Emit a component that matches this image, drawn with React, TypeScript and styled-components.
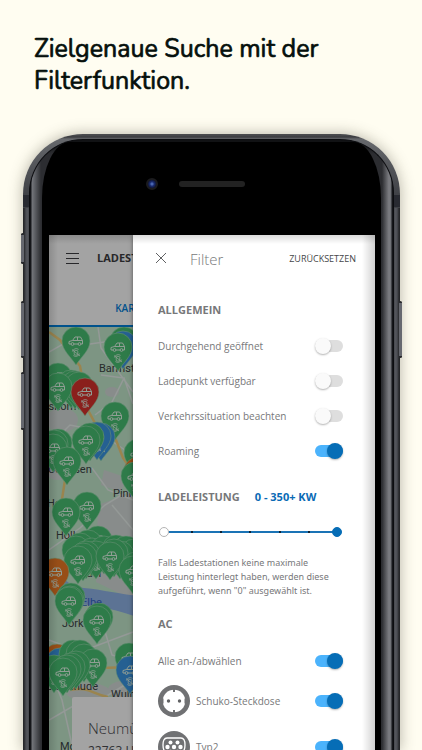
import React, { useState } from "react";
import styled, { createGlobalStyle } from "styled-components";

const GlobalStyle = createGlobalStyle`
  *, *::before, *::after { box-sizing: border-box; }
  body {
    margin: 0;
    background: #fffdf1;
    font-family: "Open Sans", "Noto Sans", sans-serif;
  }
  button { font: inherit; border: 0; padding: 0; background: none; cursor: pointer; }
`;

const Page = styled.main`
  height: 100vh;
  display: flex;
  flex-direction: column;
  overflow: hidden;
`;

const Headline = styled.h1`
  margin: 0;
  padding: 33px 34px 37px;
  max-width: 384px;
  color: #06100c;
  font: 400 25px/32px "Nunito", "Lato", sans-serif;
  -webkit-text-stroke: 0.7px #06100c;
`;

const Phone = styled.section`
  position: relative;
  flex: 1;
  min-height: 0;
  margin: 0 22px 0 23px;
  padding: 5px 6px 0;
  display: flex;
  border-radius: 60px 60px 0 0;
  background:
    linear-gradient(90deg, #27282b 0 1px, #4c4e54 3px, #55575d 5px, transparent 6px calc(100% - 6px), #55575d calc(100% - 5px), #4c4e54 calc(100% - 3px), #27282b calc(100% - 1px)) 0 74px no-repeat,
    linear-gradient(#4a4b4e 0 1px, #3b3c40 3px, #66686c 5px, #404247 60px);
  box-shadow: 0 0 14px 1px rgba(70, 66, 50, 0.35);
`;

const SideKey = styled.span<{ $side: "left" | "right"; $top: number; $size: number }>`
  position: absolute;
  ${(p) => p.$side}: -2px;
  top: ${(p) => p.$top}px;
  width: 3px;
  height: ${(p) => p.$size}px;
  border-radius: 2px;
  border: solid #26272a;
  border-width: 2px 0;
  background: #66686f;
`;

const Antenna = styled.span<{ $side: "left" | "right" }>`
  position: absolute;
  ${(p) => p.$side}: 0;
  top: 61px;
  width: 6px;
  height: 12px;
  background: #282a31;
`;

const Rim = styled.div`
  flex: 1;
  min-width: 0;
  display: flex;
  padding: 2px 12px 0;
  border-radius: 54px 54px 0 0;
  border: 1px solid #0c0d10;
  border-bottom: 0;
  background:
    linear-gradient(#111214 0 3px, transparent 14px),
    linear-gradient(90deg, #15161a 0 1px, #74767b 2px, #5c5e63 5px, #2c2d31 11px, #2c2d31 calc(100% - 11px), #7d7e83 calc(100% - 4px), #6c6e73 calc(100% - 2px), #15161a calc(100% - 1px));
`;

const Glass = styled.div`
  flex: 1;
  min-width: 0;
  display: flex;
  flex-direction: column;
  padding: 0 6px 0 7px;
  border-radius: 28px 28px 0 0 / 56px 56px 0 0;
  background: #000;
`;

const Sensors = styled.div`
  flex: none;
  height: 93px;
  display: grid;
  grid-template-columns: 1fr 66px 1fr;
  align-items: center;
  column-gap: 21px;
  padding-bottom: 10px;
`;

const Camera = styled.span`
  justify-self: end;
  width: 12px;
  height: 12px;
  border-radius: 50%;
  border: 2px solid #1b1b1e;
  background: radial-gradient(circle, #4a66b0 0 1px, #1c2f78 2px, #10173a 4px);
`;

const Speaker = styled.span`
  height: 6px;
  border-radius: 3px;
  background: #222;
`;

const Screen = styled.div`
  position: relative;
  flex: 1;
  min-height: 0;
  overflow: hidden;
  display: flex;
  flex-direction: column;
  background: #fff;
`;

const AppBar = styled.header`
  flex: none;
  height: 45px;
  padding: 0 17px;
  display: flex;
  align-items: center;
  gap: 18px;
  color: #3e3e42;
`;

const AppTitle = styled.h2`
  margin: 0;
  font-size: 11px;
  font-weight: 700;
`;

const IconButton = styled.button`
  display: flex;
  color: inherit;
`;

const Tabs = styled.nav`
  flex: none;
  height: 47px;
  display: grid;
  grid-template-columns: 1fr 1fr;
`;

const Tab = styled.button<{ $active?: boolean }>`
  padding-top: 10px;
  border-bottom: 2px solid ${(p) => (p.$active ? "#0080dc" : "transparent")};
  color: ${(p) => (p.$active ? "#0080dc" : "#8a8a8a")};
  font-size: 10px;
  font-weight: 600;
`;

const MapArea = styled.div`
  position: relative;
  flex: 1;
  min-height: 0;
  overflow: hidden;
  background: #c6e8cf;
`;

const MapDrawing = styled.svg`
  display: block;
  width: 326px;
  height: 423px;
`;

const PlaceCard = styled.article`
  position: absolute;
  top: 370px;
  left: 23px;
  right: 23px;
  height: 150px;
  padding: 18px 16px;
  border-radius: 2px;
  background: #fff;
  color: #4c4c50;
  font-size: 12px;
  line-height: 18px;
  white-space: nowrap;
`;

const PlaceName = styled.h3`
  margin: 0 0 1px;
  font-size: 15px;
  line-height: 26px;
  font-weight: 300;
`;

const Scrim = styled.div`
  position: absolute;
  inset: 0;
  background: rgba(0, 0, 0, 0.36);
`;

const Drawer = styled.aside`
  position: absolute;
  inset: 0 0 auto 84px;
  padding: 0 32px 0 25px;
  background: #fff;
  color: #77787a;
  box-shadow: 0 0 4px rgba(0, 0, 0, 0.5);
`;

const ScreenShade = styled.div`
  position: absolute;
  inset: 0;
  pointer-events: none;
  background:
    linear-gradient(rgba(0, 0, 0, 0.14), transparent 9px),
    linear-gradient(90deg, rgba(0, 0, 0, 0.14), transparent 9px),
    linear-gradient(270deg, rgba(0, 0, 0, 0.18), transparent 13px);
`;

const DrawerBar = styled.header`
  height: 46px;
  margin: 0 -13px 0 -3px;
  display: flex;
  align-items: center;
`;

const DrawerTitle = styled.h2`
  flex: 1;
  margin: 0 0 0 23px;
  padding-top: 2px;
  font-size: 15px;
  font-weight: 300;
`;

const ResetButton = styled.button`
  color: #454648;
  font-size: 9px;
`;

const GroupTitle = styled.h3<{ $gap: number }>`
  margin: ${(p) => p.$gap}px 0 0;
  display: flex;
  gap: 15px;
  font-size: 11px;
  line-height: 16px;
  font-weight: 700;
`;

const Range = styled.output`
  color: #0a6ab5;
`;

const Row = styled.label<{ $height: number }>`
  height: ${(p) => p.$height}px;
  display: flex;
  align-items: center;
  gap: 6px;
  font-size: 10px;
  cursor: pointer;
`;

const RowText = styled.span`
  flex: 1;
`;

const Rows = styled.div<{ $gap: number }>`
  padding-top: ${(p) => p.$gap}px;
`;

const Switch = styled.input.attrs({ type: "checkbox", role: "switch" })`
  appearance: none;
  flex: none;
  width: 28px;
  height: 12px;
  margin: 0;
  display: flex;
  align-items: center;
  border-radius: 6px;
  background: #dedede;
  cursor: pointer;

  &::before {
    content: "";
    width: 16px;
    height: 16px;
    border-radius: 50%;
    background: #fafafa;
    box-shadow: 0 1px 2px rgba(0, 0, 0, 0.3);
  }

  &:checked {
    justify-content: flex-end;
    background: #4bb3fc;
  }

  &:checked::before {
    background: #066db6;
  }
`;

const Slider = styled.div`
  position: relative;
  height: 20px;
  margin: 17px 1px 0;
  display: flex;
  align-items: center;
`;

const SliderTrack = styled.div`
  flex: 1;
  height: 2px;
  margin: 0 5px;
  display: flex;
  justify-content: space-evenly;
  background: #1a73b5;
`;

const Tick = styled.span`
  width: 2px;
  height: 2px;
  background: #0d2233;
`;

const Handle = styled.input.attrs({ type: "range", min: 0, max: 6, step: 1 })<{ $filled?: boolean }>`
  position: absolute;
  inset: 0;
  width: 100%;
  margin: 0;
  appearance: none;
  background: none;
  pointer-events: none;

  &::-webkit-slider-thumb {
    appearance: none;
    width: 10px;
    height: 10px;
    border-radius: 50%;
    border: 1px solid ${(p) => (p.$filled ? "#066db6" : "#b4b4b4")};
    background: ${(p) => (p.$filled ? "#066db6" : "#fff")};
    pointer-events: auto;
  }
`;

const Note = styled.p`
  margin: 14px 0 0;
  font-family: "Noto Sans", sans-serif;
  font-size: 9px;
  line-height: 14px;
`;

type PinData = [number, number, string?];

const GREEN = "#48c072";
const RED = "#d8332c";
const BLUE = "#3b96e4";
const ORANGE = "#ee7a24";

const pins: PinData[] = [
  [124, 365], [123, 369, BLUE], [76, 365], [118, 371],
  [58, 401], [71, 408], [75, 409], [79, 410], [58, 411], [85, 416, RED],
  [115, 440],
  [101, 461, BLUE], [97, 460, BLUE], [90, 461], [86, 464],
  [58, 467], [54, 468], [53, 472], [67, 485],
  [138, 477], [138, 495, ORANGE], [135, 500],
  [87, 530], [66, 536],
  [98, 564], [88, 568], [80, 571], [76, 574], [92, 576], [104, 574], [116, 573], [126, 574], [134, 577],
  [96, 579], [86, 579], [83, 581], [78, 584], [120, 579], [114, 577], [110, 580], [136, 590], [133, 594], [147, 594, BLUE],
  [55, 596, ORANGE], [71, 621], [70, 624], [69, 625],
  [99, 641], [97, 644],
  [57, 682, ORANGE], [60, 686, BLUE], [73, 678], [80, 678], [84, 682], [93, 687],
  [76, 689], [71, 691], [54, 693], [67, 693], [63, 696],
  [129, 681], [130, 694, BLUE],
];

const Pin = ({ x, y, color = GREEN }: { x: number; y: number; color?: string }) => (
  <g transform={`translate(${x} ${y})`}>
    <path
      d="M0 0C-5-8-14-15-14-24A14 14 0 0 1 14-24C14-15 5-8 0 0Z"
      fill={color}
      stroke="#a0e0b4"
      strokeWidth="0.6"
    />
    <g fill="none" stroke="#e2f7e8" strokeWidth="1" strokeLinejoin="round">
      <path d="M-5-21H-7V-23.500L-3.500-24.500-1-28H4.500L6.500-24.500V-21H5M-2-21H2M-3.500-24.500H6.500M1.500-28V-24.500" />
      <circle cx="-3.500" cy="-21" r="1.400" />
      <circle cx="3.500" cy="-21" r="1.400" />
      <g strokeWidth="0.8">
        <path d="M-3.600-13.500A4 4 0 0 1 2.600-15.600M3.600-11.500A4 4 0 0 1-2.600-9.400M-4-15.500 4-9" />
        <rect x="-1.800" y="-14.500" width="3.600" height="4.500" rx="1" />
      </g>
    </g>
  </g>
);

const places: [string, number, number][] = [
  ["Barmstedt", 99, 372], ["Elmshorn", 30, 410], ["Uetersen", 48, 473], ["Pinneberg", 113, 497],
  ["Hetlingen", 47, 507], ["Hollern", 56, 539], ["Wedel", 71, 577], ["Jork", 62, 627], ["Buxtehude", 46, 690],
  ["Wulmstorf", 111, 698], ["Moisburg", 60, 750],
];

const ChargingMap = () => (
  <MapDrawing viewBox="49 327 326 423" aria-label="Karte der Ladestationen" role="img">
    <rect x="49" y="327" width="326" height="423" fill="#c4e9ce" />
    <g fill="#d5dcd9">
      <ellipse cx="62" cy="420" rx="16" ry="12" />
      <ellipse cx="112" cy="392" rx="7" ry="5" />
      <ellipse cx="58" cy="472" rx="12" ry="8" />
      <path d="M98 505 133 492V600L96 582Z" />
      <path d="M104 470 128 478 120 492 101 485Z" />
      <ellipse cx="88" cy="692" rx="22" ry="9" />
      <ellipse cx="122" cy="690" rx="14" ry="9" />
    </g>
    <path d="M49 562C62 576 66 586 84 588 105 590 118 594 140 596V618C118 610 98 606 80 604 62 602 56 582 49 570Z" fill="#90b4e8" />
    <g fill="none" stroke="#e8efec" strokeWidth="1.500">
      <path d="M49 352 70 340 90 344 133 338M98 327 101 348 133 392M101 375 124 378 112 402 95 415M124 378 133 404" />
      <path d="M49 446 70 425 95 430 128 452M49 550 80 528 105 505 133 488M92 468 108 490 133 500M112 505 133 530" />
      <path d="M49 640 80 652 133 632M49 668 62 700 72 745M49 720 75 705M104 628 112 655 133 662M100 700 133 680" />
    </g>
    <g fill="none" stroke="#f1cf7a" strokeWidth="2.500">
      <path d="M49 332 60 340 80 366 88 410 96 425 116 440 123 458 133 472" />
      <path d="M65 480 60 512M100 668 133 667M70 690C88 686 92 694 108 697" />
    </g>
    <g fill="#3c4444" fontFamily="Roboto, sans-serif" fontSize="11">
      {places.map(([name, x, y]) => (
        <text key={name} x={x} y={y}>{name}</text>
      ))}
    </g>
    <text x="81" y="606" fill="#3562c8" fontFamily="Roboto, sans-serif" fontSize="11">Elbe</text>
    {pins.map(([x, y, color], i) => (
      <Pin key={i} x={x} y={y} color={color} />
    ))}
  </MapDrawing>
);

const MenuIcon = () => (
  <svg width="13" height="12" viewBox="0 0 13 12" stroke="currentColor" aria-hidden="true">
    <path d="M0 1.500H13M0 6.500H13M0 11.500H13" />
  </svg>
);

const CloseIcon = () => (
  <svg width="12" height="12" viewBox="0 0 12 12" stroke="#606163" strokeWidth="1" aria-hidden="true">
    <path d="M1 1 11 11M11 1 1 11" />
  </svg>
);

const SchukoIcon = () => (
  <svg width="32" height="32" viewBox="0 0 32 32" aria-hidden="true">
    <circle cx="16" cy="16" r="16" fill="#707173" />
    <circle cx="16" cy="16" r="11.300" fill="#fff" />
    <path d="M15 4H17V7H15ZM15 25H17V28H15ZM4 13.500H5.500V18.500H4ZM26.500 13.500H28V18.500H26.500Z" fill="#707173" />
    <circle cx="10.500" cy="16" r="1.700" fill="#606163" />
    <circle cx="21.500" cy="16" r="1.700" fill="#606163" />
  </svg>
);

const Typ2Icon = () => (
  <svg width="32" height="32" viewBox="0 0 32 32" aria-hidden="true">
    <circle cx="16" cy="16" r="16" fill="#707173" />
    <path d="M9 7H23C26 7 27 10 27 14 27 21 22 26 16 26S5 21 5 14C5 10 6 7 9 7Z" fill="none" stroke="#fff" strokeWidth="1.300" />
    <g fill="#fff">
      <circle cx="12.500" cy="11.500" r="2" />
      <circle cx="19.500" cy="11.500" r="2" />
      <circle cx="9.500" cy="16" r="2.200" />
      <circle cx="16" cy="16" r="2.200" />
      <circle cx="22.500" cy="16" r="2.200" />
      <circle cx="12.500" cy="21" r="2.200" />
      <circle cx="19.500" cy="21" r="2.200" />
    </g>
  </svg>
);

const general: [string, boolean][] = [
  ["Durchgehend geöffnet", false],
  ["Ladepunkt verfügbar", false],
  ["Verkehrssituation beachten", false],
  ["Roaming", true],
];

export default function App() {
  const [low, setLow] = useState(0);
  const [high, setHigh] = useState(6);

  return (
    <>
      <GlobalStyle />
      <Page>
        <Headline>Zielgenaue Suche mit der Filterfunktion.</Headline>
        <Phone>
          <SideKey $side="left" $top={99} $size={31} />
          <SideKey $side="left" $top={167} $size={57} />
          <SideKey $side="left" $top={238} $size={58} />
          <SideKey $side="right" $top={167} $size={57} />
          <Antenna $side="left" />
          <Antenna $side="right" />
          <Rim>
            <Glass>
              <Sensors>
                <Camera />
                <Speaker />
              </Sensors>
              <Screen>
                <AppBar>
                  <IconButton aria-label="Menü"><MenuIcon /></IconButton>
                  <AppTitle>LADESTATIONEN</AppTitle>
                </AppBar>
                <Tabs>
                  <Tab $active>KARTE</Tab>
                  <Tab>LISTE</Tab>
                </Tabs>
                <MapArea>
                  <ChargingMap />
                  <PlaceCard>
                    <PlaceName>Neumühlen</PlaceName>
                    22763 Hamburg
                  </PlaceCard>
                </MapArea>
                <Scrim />
                <Drawer aria-label="Filter">
                  <DrawerBar>
                    <IconButton aria-label="Schließen"><CloseIcon /></IconButton>
                    <DrawerTitle>Filter</DrawerTitle>
                    <ResetButton>ZURÜCKSETZEN</ResetButton>
                  </DrawerBar>
                  <GroupTitle $gap={21}>ALLGEMEIN</GroupTitle>
                  <Rows $gap={10}>
                    {general.map(([label, on]) => (
                      <Row key={label} $height={35}>
                        <RowText>{label}</RowText>
                        <Switch defaultChecked={on} />
                      </Row>
                    ))}
                  </Rows>
                  <GroupTitle $gap={21}>
                    LADELEISTUNG <Range>0 - 350+ KW</Range>
                  </GroupTitle>
                  <Slider>
                    <SliderTrack>
                      {[1, 2, 3, 4, 5].map((n) => <Tick key={n} />)}
                    </SliderTrack>
                    <Handle aria-label="Minimale Ladeleistung" value={low} onChange={(e) => setLow(Math.min(+e.target.value, high))} />
                    <Handle $filled aria-label="Maximale Ladeleistung" value={high} onChange={(e) => setHigh(Math.max(+e.target.value, low))} />
                  </Slider>
                  <Note>
                    Falls Ladestationen keine maximale Leistung hinterlegt haben, werden diese aufgeführt, wenn "0" ausgewählt ist.
                  </Note>
                  <GroupTitle $gap={18}>AC</GroupTitle>
                  <Rows $gap={11}>
                    <Row $height={35}>
                      <RowText>Alle an-/abwählen</RowText>
                      <Switch defaultChecked />
                    </Row>
                    <Row $height={46}>
                      <SchukoIcon />
                      <RowText>Schuko-Steckdose</RowText>
                      <Switch defaultChecked />
                    </Row>
                    <Row $height={46}>
                      <Typ2Icon />
                      <RowText>Typ2</RowText>
                      <Switch defaultChecked />
                    </Row>
                  </Rows>
                </Drawer>
                <ScreenShade />
              </Screen>
            </Glass>
          </Rim>
        </Phone>
      </Page>
    </>
  );
}
